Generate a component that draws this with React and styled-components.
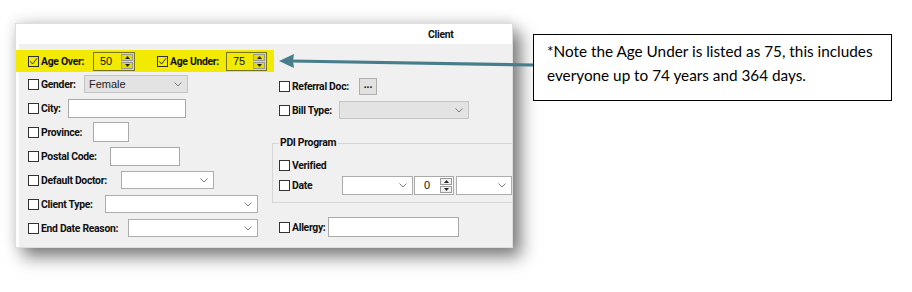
import React from "react";
import styled, { createGlobalStyle } from "styled-components";

const GlobalStyle = createGlobalStyle`
  html, body { margin: 0; padding: 0; background: #ffffff; }
  #root { width: 912px; height: 292px; overflow: hidden; }
`;

const Page = styled.div`
  position: relative;
  width: 912px;
  height: 292px;
  display: flex;
  align-items: flex-start;
  font-family: Roboto, "Liberation Sans", Arial, sans-serif;
`;

const Panel = styled.div`
  margin: 23px 0 0 15px;
  width: 498px;
  height: 225px;
  flex: none;
  box-sizing: border-box;
  border: 1px solid #dedede;
  background: #ffffff;
  display: flex;
  flex-direction: column;
  overflow: hidden;
  box-shadow: 8px 9px 16px rgba(0, 0, 0, 0.5), 0 -2px 12px rgba(0, 0, 0, 0.12);
`;

const Header = styled.div`
  height: 20px;
  flex: none;
  display: flex;
  align-items: center;
  padding-left: 412px;
  font-weight: bold;
  font-size: 10.4px;
  letter-spacing: -0.3px;
  color: #111;
  background: #fff;
`;

const Body = styled.div`
  flex: 1;
  margin-left: 3px;
  background: #f0f0f0;
  display: flex;
  flex-direction: column;
  padding-top: 6px;
`;

const Highlight = styled.div`
  margin-left: -4px;
  width: 259px;
  height: 22px;
  box-sizing: border-box;
  padding-left: 13px;
  background: #f2ea00;
  display: flex;
  align-items: center;
`;

const Columns = styled.div`
  display: flex;
`;

const LeftCol = styled.div`
  width: 253px;
  flex: none;
  box-sizing: border-box;
  padding-left: 9px;
  display: flex;
  flex-direction: column;
`;

const RightCol = styled.div`
  flex: 1;
  min-width: 0;
  display: flex;
  flex-direction: column;
  padding-top: 2px;
`;

const Row = styled.div`
  height: ${(p) => p.$h || 24}px;
  margin-top: ${(p) => p.$mt || 0}px;
  padding-left: ${(p) => p.$pl || 0}px;
  display: flex;
  align-items: center;
  flex: none;
`;

const CheckLabel = styled.label`
  width: ${(p) => (p.$w ? `${p.$w}px` : "auto")};
  margin-left: ${(p) => p.$ml || 0}px;
  display: flex;
  align-items: center;
  gap: 2px;
  flex: none;
  font-size: 10.4px;
  letter-spacing: -0.3px;
  font-weight: bold;
  color: #111;
  white-space: nowrap;
`;

const Box = styled.span`
  width: 11px;
  height: 11px;
  box-sizing: border-box;
  border: 1px solid #333;
  background: ${(p) => (p.$checked ? "transparent" : "#fff")};
  display: inline-flex;
  align-items: center;
  justify-content: center;
  flex: none;
`;

const TextInput = styled.div`
  width: ${(p) => p.$w}px;
  height: ${(p) => p.$h || 19}px;
  box-sizing: border-box;
  border: 1px solid #a9a9a9;
  background: #fff;
  flex: none;
`;

const Select = styled.div`
  width: ${(p) => p.$w}px;
  height: ${(p) => p.$h || 18}px;
  box-sizing: border-box;
  border: 1px solid ${(p) => (p.$disabled ? "#c4c4c4" : "#adadad")};
  background: ${(p) => (p.$disabled ? "#e3e3e3" : "#fff")};
  display: flex;
  align-items: center;
  justify-content: space-between;
  padding: 0 5px 0 4px;
  flex: none;
  margin-left: ${(p) => p.$ml || 0}px;
  font-family: "Liberation Sans", Arial, sans-serif;
  font-size: 11px;
  color: #222;
`;

const SpinBox = styled.div`
  width: ${(p) => p.$w}px;
  height: 19px;
  box-sizing: border-box;
  border: 1px solid ${(p) => (p.$hl ? "#77741a" : "#a9a9a9")};
  background: ${(p) => (p.$hl ? "transparent" : "#fff")};
  display: flex;
  align-items: stretch;
  flex: none;
  margin-left: ${(p) => p.$ml || 0}px;
`;

const SpinValue = styled.div`
  flex: 1;
  display: flex;
  align-items: center;
  padding-left: ${(p) => p.$pl || 6}px;
  font-family: "Liberation Sans", Arial, sans-serif;
  font-size: 11px;
  color: #111;
`;

const SpinButtons = styled.div`
  width: 12px;
  margin: 1px 1px 1px 0;
  display: flex;
  flex-direction: column;
  gap: 1px;
`;

const SpinBtn = styled.div`
  flex: 1;
  box-sizing: border-box;
  border: 1px solid #9a9a9a;
  background: rgba(0, 0, 0, 0.06);
  display: flex;
  align-items: center;
  justify-content: center;
`;

const SmallButton = styled.div`
  width: 18px;
  height: 17px;
  box-sizing: border-box;
  border: 1px solid #adadad;
  background: #e1e1e1;
  display: flex;
  align-items: center;
  justify-content: center;
  font-size: 10px;
  font-weight: bold;
  line-height: 1;
  padding-bottom: 2px;
  flex: none;
`;

const GroupBox = styled.fieldset`
  margin: 15px 0 0 0;
  padding: 0 0 7px 6px;
  width: 300px;
  box-sizing: border-box;
  border: 1px solid #d6d6d6;
  min-width: 0;
`;

const Legend = styled.legend`
  padding: 0 2px 0 1px;
  font-size: 10.4px;
  letter-spacing: -0.3px;
  line-height: 12px;
  font-weight: bold;
  color: #111;
`;

const Note = styled.div`
  margin: 34px 0 0 20px;
  width: 359px;
  height: 67px;
  flex: none;
  box-sizing: border-box;
  border: 1px solid #000;
  padding: 4px 0 0 13px;
  font-family: "Lato", "Open Sans", sans-serif;
  font-size: 15.3px;
  line-height: 24px;
  color: #000;
  background: #fff;
  white-space: nowrap;
`;

const ArrowLayer = styled.svg`
  position: absolute;
  left: 0;
  top: 0;
  pointer-events: none;
`;

function Check({ checked }) {
  return (
    <Box $checked={checked}>
      {checked && (
        <svg width="9" height="9" viewBox="0 0 9 9">
          <polyline points="1.2,4.2 3.6,7 8,1.3" fill="none" stroke="#333" strokeWidth="1" />
        </svg>
      )}
    </Box>
  );
}

function Chevron() {
  return (
    <svg width="8" height="5" viewBox="0 0 8 5">
      <polyline points="0.5,0.5 4,4 7.5,0.5" fill="none" stroke="#7a7a7a" strokeWidth="1" />
    </svg>
  );
}

function Tri({ up }) {
  return (
    <svg width="5" height="3" viewBox="0 0 5 3">
      <polygon points={up ? "0,3 5,3 2.5,0" : "0,0 5,0 2.5,3"} fill="#222" />
    </svg>
  );
}

function Spinner({ value, w, hl, ml, pl }) {
  return (
    <SpinBox $w={w} $hl={hl} $ml={ml}>
      <SpinValue $pl={pl}>{value}</SpinValue>
      <SpinButtons>
        <SpinBtn>
          <Tri up />
        </SpinBtn>
        <SpinBtn>
          <Tri />
        </SpinBtn>
      </SpinButtons>
    </SpinBox>
  );
}

function Field({ label, w, ml, checked, children }) {
  return (
    <>
      <CheckLabel $w={w} $ml={ml}>
        <Check checked={checked} />
        {label}
      </CheckLabel>
      {children}
    </>
  );
}

function EmptySelect({ w, h, ml, disabled }) {
  return (
    <Select $w={w} $h={h} $ml={ml} $disabled={disabled}>
      <span />
      <Chevron />
    </Select>
  );
}

export default function App() {
  return (
    <>
      <GlobalStyle />
      <Page>
        <Panel>
          <Header>Client</Header>
          <Body>
            <Highlight>
              <Field label="Age Over:" w={65} checked>
                <Spinner value="50" w={42} hl />
              </Field>
              <Field label="Age Under:" w={69} ml={22} checked>
                <Spinner value="75" w={41} hl />
              </Field>
            </Highlight>
            <Columns>
              <LeftCol>
                <Row>
                  <Field label="Gender:" w={56}>
                    <Select $w={104} $disabled>
                      Female
                      <Chevron />
                    </Select>
                  </Field>
                </Row>
                <Row>
                  <Field label="City:" w={40}>
                    <TextInput $w={118} />
                  </Field>
                </Row>
                <Row>
                  <Field label="Province:" w={65}>
                    <TextInput $w={36} $h={20} />
                  </Field>
                </Row>
                <Row>
                  <Field label="Postal Code:" w={82}>
                    <TextInput $w={70} />
                  </Field>
                </Row>
                <Row>
                  <Field label="Default Doctor:" w={93}>
                    <EmptySelect w={93} />
                  </Field>
                </Row>
                <Row>
                  <Field label="Client Type:" w={77}>
                    <EmptySelect w={153} />
                  </Field>
                </Row>
                <Row>
                  <Field label="End Date Reason:" w={100}>
                    <EmptySelect w={130} />
                  </Field>
                </Row>
              </LeftCol>
              <RightCol>
                <Row $pl={7}>
                  <Field label="Referral Doc:" w={80}>
                    <SmallButton>...</SmallButton>
                  </Field>
                </Row>
                <Row $pl={7}>
                  <Field label="Bill Type:" w={60}>
                    <EmptySelect w={130} disabled />
                  </Field>
                </Row>
                <GroupBox>
                  <Legend>PDI Program</Legend>
                  <Row $h={20} $mt={6}>
                    <Field label="Verified" />
                  </Row>
                  <Row $h={20}>
                    <Field label="Date" w={63}>
                      <EmptySelect w={71} h={19} />
                      <Spinner value="0" w={40} ml={1} pl={9} />
                      <EmptySelect w={56} h={19} ml={2} />
                    </Field>
                  </Row>
                </GroupBox>
                <Row $h={20} $mt={14} $pl={7}>
                  <Field label="Allergy:" w={49}>
                    <TextInput $w={131} $h={20} />
                  </Field>
                </Row>
              </RightCol>
            </Columns>
          </Body>
        </Panel>
        <Note>
          *Note the Age Under is listed as 75, this includes
          <br />
          everyone up to 74 years and 364 days.
        </Note>
        <ArrowLayer width="912" height="292" viewBox="0 0 912 292">
          <line x1="533" y1="65" x2="291" y2="61" stroke="#487d8b" strokeWidth="3.2" />
          <polygon points="279,61 294,54 293,61 294,68" fill="#487d8b" />
        </ArrowLayer>
      </Page>
    </>
  );
}
